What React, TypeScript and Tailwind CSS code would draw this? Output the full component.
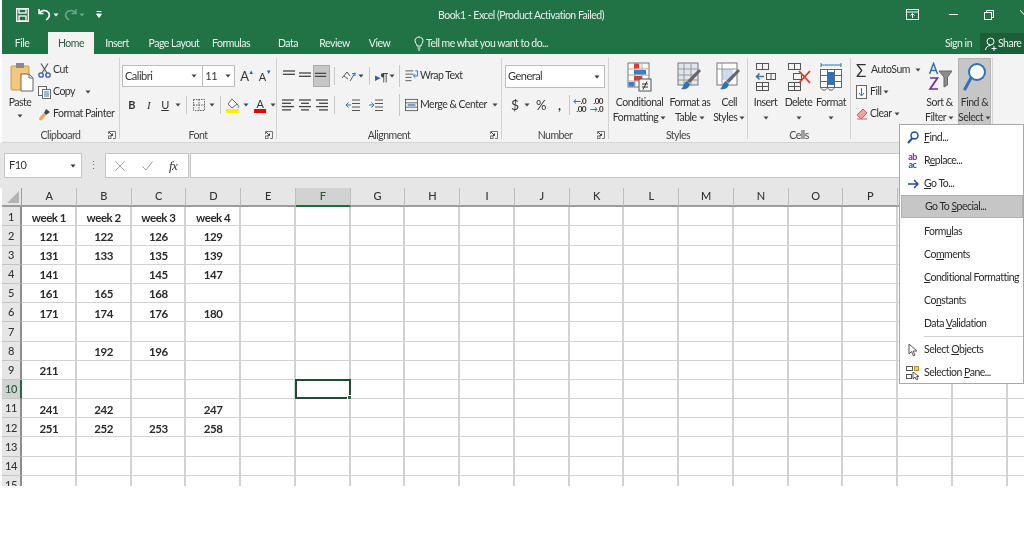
// Excel ribbon with Find & Select menu open
import React from "react";

const Caret = ({ className = "", color = "#444" }: { className?: string; color?: string }) => (
  <svg width="6" height="4" viewBox="0 0 6 4" className={`shrink-0 ${className}`} aria-hidden="true">
    <path d="M0.5 0.5H5.5L3 3.5Z" fill={color} />
  </svg>
);

const Launcher = () => (
  <svg width="8" height="8" viewBox="0 0 8 8" aria-hidden="true" fill="none" stroke="#777" strokeWidth="1">
    <path d="M0.5 3V0.5H7.5V7.5H5" />
    <path d="M1 1L4.5 4.5M2.5 4.5H4.5V2.5" stroke="#444" />
    <rect x="0.5" y="5" width="2.5" height="2.5" />
  </svg>
);

const Lines = ({ rows }: { rows: [number, number][] }) => (
  <svg width="16" height="14" viewBox="0 0 16 14" aria-hidden="true" stroke="#444" strokeWidth="1.3">
    {rows.map(([a, b], i) => (
      <line key={i} x1={a} x2={b} y1={2 + i * 3.3} y2={2 + i * 3.3} />
    ))}
  </svg>
);

const Sep = ({ h = "h-[22px]" }: { h?: string }) => <div className={`w-px ${h} bg-[#c8c8c8] shrink-0`} />;

const Group = ({
  w,
  label,
  launcher,
  children,
}: {
  w: string;
  label: string;
  launcher?: boolean;
  children: React.ReactNode;
}) => (
  <section className={`${w} shrink-0 h-[81px] border-r border-[#d2d2d2] flex flex-col`}>
    <div className="h-[70px] shrink-0">{children}</div>
    <div className="h-[14px] shrink-0 grid grid-cols-[1fr_auto_1fr] items-center text-[#444]">
      <span />
      <span className="text-[10.5px] leading-none">{label}</span>
      <span className="justify-self-end pr-[3px] flex">{launcher && <Launcher />}</span>
    </div>
  </section>
);

const BigButton = ({
  w,
  icon,
  l1,
  l2,
  arrowOnL2,
}: {
  w: string;
  icon: React.ReactNode;
  l1: string;
  l2?: string;
  arrowOnL2?: boolean;
}) => (
  <div className={`${w} flex flex-col items-center text-[10.5px] leading-[15px] text-[#333]`}>
    <div className="h-[33px] flex items-start justify-center">{icon}</div>
    <span className="whitespace-nowrap">{l1}</span>
    <span className="whitespace-nowrap flex items-center gap-[2px] h-[15px]">
      {l2}
      {arrowOnL2 && <Caret />}
    </span>
  </div>
);

const CondIcon = () => (
  <svg width="25" height="31" viewBox="0 0 25 31" aria-hidden="true">
    <rect x="1" y="1" width="21" height="24" fill="#fff" stroke="#777" />
    <path d="M8 1V25M15 1V25M1 7H22M1 13H22M1 19H22" stroke="#aaa" />
    <rect x="7" y="1.5" width="5" height="5" fill="#d9402e" />
    <rect x="7" y="8" width="12" height="4.500" fill="#3d7fc4" />
    <rect x="7" y="14" width="8" height="4.500" fill="#d9402e" />
    <rect x="1.500" y="20" width="6" height="4.500" fill="#3d7fc4" />
    <rect x="12" y="17" width="12" height="12" fill="#f4f4f4" stroke="#555" />
    <path d="M15 22H21M15 25H21M20 19.500L16 27.500" stroke="#333" />
  </svg>
);

const TableIcon = () => (
  <svg width="26" height="31" viewBox="0 0 26 31" aria-hidden="true">
    <rect x="1" y="1" width="20" height="22" fill="#dfe6ee" stroke="#777" />
    <path d="M1 7H21M1 13H21M1 18H21M7 1V23M14 1V23" stroke="#999" />
    <path d="M24 9L13 21L10 19L22 7Z" fill="#666" />
    <path d="M10 19L13 22C12 27 7 28 4 27C7 25 6 21 10 19Z" fill="#2f72b8" />
  </svg>
);

const CellStyleIcon = () => (
  <svg width="26" height="31" viewBox="0 0 26 31" aria-hidden="true">
    <rect x="1" y="1" width="20" height="22" fill="#fff" stroke="#777" />
    <rect x="6" y="7" width="11" height="11" fill="#c7dcef" />
    <path d="M1 7H21M6 1V23" stroke="#999" />
    <path d="M24 9L13 21L10 19L22 7Z" fill="#666" />
    <path d="M10 19L13 22C12 27 7 28 4 27C7 25 6 21 10 19Z" fill="#2f72b8" />
  </svg>
);

const InsertIcon = () => (
  <svg width="22" height="29" viewBox="0 0 22 29" fill="none" aria-hidden="true" stroke="#555">
    <rect x="1.500" y="1.500" width="12" height="6" />
    <path d="M7.500 1.500V7.500" />
    <rect x="11.500" y="11.500" width="9" height="6" />
    <path d="M16 11.500V17.500" />
    <path d="M1.500 14.500H9M4.500 11.500L1.500 14.500L4.500 17.500" stroke="#2f72b8" strokeWidth="1.500" />
    <rect x="1.500" y="20.500" width="12" height="8" />
    <path d="M7.500 20.500V28.500M1.500 24.500H13.500" />
  </svg>
);

const DeleteIcon = () => (
  <svg width="24" height="29" viewBox="0 0 24 29" fill="none" aria-hidden="true" stroke="#555">
    <rect x="1.500" y="1.500" width="12" height="6" />
    <path d="M7.500 1.500V7.500" />
    <rect x="6.500" y="11.500" width="8" height="6" />
    <rect x="1.500" y="20.500" width="12" height="8" />
    <path d="M7.500 20.500V28.500M1.500 24.500H13.500" />
    <path d="M12 9L23 21M23 9L12 21" stroke="#d8392b" strokeWidth="1.800" />
  </svg>
);

const FormatIcon = () => (
  <svg width="24" height="31" viewBox="0 0 24 31" fill="none" aria-hidden="true" stroke="#666">
    <path d="M2 3H22M2 1V5M22 1V5" stroke="#2f72b8" />
    <rect x="1.500" y="7.500" width="21" height="18" fill="#fff" />
    <path d="M8.500 7.500V25.500M15.500 7.500V25.500M1.500 13.500H22.500M1.500 19.500H22.500" />
    <rect x="9" y="10" width="6" height="13" fill="#2f72b8" stroke="none" />
    <path d="M2 25.500C2 29 8 29 8 25.500M9 25.500C9 29 15 29 15 25.500" />
  </svg>
);

const SortIcon = () => (
  <svg width="24" height="29" viewBox="0 0 24 29" aria-hidden="true" fill="none">
    <path d="M1.500 12L5.500 1.500L9.500 12M3 8.500H8" stroke="#2f72b8" strokeWidth="1.500" />
    <path d="M2 16H9.500L2 27H10" stroke="#7030a0" strokeWidth="1.700" />
    <path d="M11 9H24L19.500 15V23L16 25V15Z" fill="#8c8c8c" stroke="#666" />
  </svg>
);

const FindBigIcon = () => (
  <svg width="24" height="29" viewBox="0 0 24 29" fill="none" aria-hidden="true">
    <circle cx="14" cy="10" r="8" fill="#fff" stroke="#2f72b8" strokeWidth="2" />
    <path d="M8 16L2 27" stroke="#2f72b8" strokeWidth="3" strokeLinecap="round" />
  </svg>
);

const PasteIcon = () => (
  <svg width="24" height="30" viewBox="0 0 24 30" aria-hidden="true">
    <rect x="1" y="4" width="18" height="24" rx="1" fill="#f2c77e" stroke="#c99a4b" />
    <rect x="6" y="1" width="8" height="5" fill="#8a8a8a" />
    <path d="M11 12H19L23 16V29H11Z" fill="#fff" stroke="#666" />
    <path d="M19 12V16H23" fill="none" stroke="#666" />
  </svg>
);

const ScissorsIcon = () => (
  <svg width="13" height="15" viewBox="0 0 13 15" fill="none" aria-hidden="true">
    <path d="M3 0.500L9 10M10 0.500L4 10" stroke="#555" strokeWidth="1.200" />
    <circle cx="3" cy="12" r="2.200" stroke="#2f5fa8" strokeWidth="1.300" />
    <circle cx="10" cy="12" r="2.200" stroke="#2f5fa8" strokeWidth="1.300" />
  </svg>
);

const CopyIcon = () => (
  <svg width="13" height="13" viewBox="0 0 13 13" fill="none" aria-hidden="true" stroke="#666">
    <rect x="0.500" y="0.500" width="8" height="9" fill="#fff" />
    <rect x="4.500" y="3.500" width="8" height="9" fill="#fff" />
    <path d="M6 6H11M6 8H11M6 10H11" stroke="#2f72b8" />
  </svg>
);

const PainterIcon = () => (
  <svg width="13" height="13" viewBox="0 0 13 13" aria-hidden="true">
    <path d="M8 1L12 4L8 7L6 5Z" fill="#444" />
    <path d="M6 5L8 7L4 12C3 13 1 12 1 11C1 9 4 7 6 5Z" fill="#e2ad55" />
  </svg>
);

const Clipboard = () => (
  <div className="flex h-full">
    <div className="w-[36px] pt-[4px] flex flex-col items-center text-[10.5px] text-[#333]">
      <div className="ml-[3px] flex">
        <PasteIcon />
      </div>
      <span className="mt-[4px] leading-[13px]">Paste</span>
      <Caret className="mt-[5px]" />
    </div>
    <div className="flex flex-col text-[10.5px] text-[#333] pt-[1px]">
      <div className="h-[22px] flex items-center gap-[2px]">
        <ScissorsIcon />
        <span>Cut</span>
      </div>
      <div className="h-[22px] flex items-center gap-[2px]">
        <CopyIcon />
        <span>Copy</span>
        <Caret className="ml-[8px]" />
      </div>
      <div className="h-[22px] flex items-center gap-[2px]">
        <PainterIcon />
        <span className="whitespace-nowrap">Format Painter</span>
      </div>
    </div>
  </div>
);

const FontGroup = () => (
  <div className="pl-[2px] pt-[7px] text-[#333]">
    <div className="flex items-center h-[22px]">
      <div className="w-[84px] h-[22px] bg-white border border-[#bcbcbc] flex items-center justify-between pl-[2px] pr-[5px] text-[11px]">
        Calibri
        <Caret />
      </div>
      <div className="w-[33px] h-[22px] bg-white border border-l-0 border-[#bcbcbc] flex items-center justify-between pl-[2px] pr-[3px] text-[11px]">
        11
        <Caret />
      </div>
      <span className="ml-[5px] w-[19px] text-[13px] leading-none relative">
        A<i className="absolute left-[8px] -top-[1px] text-[6px] not-italic text-[#2f5fa8]">▲</i>
      </span>
      <span className="w-[18px] text-[11px] leading-none relative">
        A<i className="absolute left-[7px] -top-[2px] text-[6px] not-italic text-[#2f5fa8]">▼</i>
      </span>
    </div>
    <div className="flex items-center h-[22px] mt-[7px] text-[11px]">
      <b className="w-[17px] ml-[1px] text-center">B</b>
      <i className="w-[17px] text-center font-['Liberation_Serif',serif]">I</i>
      <u className="w-[16px] text-center">U</u>
      <Caret className="ml-[2px]" />
      <Sep h="h-[18px] ml-[5px]" />
      <svg width="12" height="12" viewBox="0 0 12 12" className="ml-[6px]" fill="none" stroke="#666" aria-hidden="true">
        <path d="M0.500 0.500H11.500V11.500H0.500ZM6 0.500V11.500M0.500 6H11.500" strokeDasharray="1.500 1" />
      </svg>
      <Caret className="ml-[4px]" />
      <Sep h="h-[18px] ml-[5px]" />
      <svg width="14" height="15" viewBox="0 0 14 15" className="ml-[5px]" aria-hidden="true">
        <path d="M6 1L11 6L6 10L2 6Z" fill="#fff" stroke="#666" />
        <path d="M11 6C13 8 13 9 12 10" stroke="#2f72b8" fill="none" />
        <rect x="0" y="11" width="13" height="4" fill="#ffee00" />
      </svg>
      <Caret className="ml-[3px]" />
      <span className="ml-[5px] w-[12px] flex flex-col items-center leading-[11px]">
        <span>A</span>
        <span className="w-[12px] h-[4px] bg-[#e60000]" />
      </span>
      <Caret className="ml-[4px]" />
    </div>
  </div>
);

const OrientIcon = () => (
  <svg width="15" height="13" viewBox="0 0 15 13" fill="none" stroke="#555" aria-hidden="true">
    <path d="M1 8L6 2L9 6M3 6L7 9M9 11L14 3" />
    <path d="M14 3L11 4M14 3L14 6" stroke="#2f72b8" />
  </svg>
);

const WrapIcon = () => (
  <svg width="14" height="14" viewBox="0 0 15 14" fill="none" aria-hidden="true">
    <path d="M0.500 1.500H9M0.500 5H9M0.500 8.500H7M0.500 12H7" stroke="#555" />
    <path d="M11 1.500H13.500V7H9.500M11 5L9 7L11 9" stroke="#2f72b8" />
  </svg>
);

const MergeIcon = () => (
  <svg width="13" height="14" viewBox="0 0 15 14" fill="none" aria-hidden="true">
    <rect x="0.500" y="0.500" width="14" height="13" stroke="#555" />
    <path d="M0.500 4.500H14.500M0.500 9.500H14.500" stroke="#555" />
    <path d="M3 7H12" stroke="#2f72b8" strokeWidth="1.500" />
  </svg>
);

const IndentIcon = ({ out }: { out?: boolean }) => (
  <svg width="14" height="13" viewBox="0 0 14 13" fill="none" aria-hidden="true">
    <path d="M6 1H14M6 4.500H14M6 8H14M6 11.500H14" stroke="#555" />
    <path d={out ? "M5 6H0M2.500 3.500L0 6L2.500 8.500" : "M0 6H5M2.500 3.500L5 6L2.500 8.500"} stroke="#2f72b8" />
  </svg>
);

const Alignment = () => (
  <div className="pt-[7px] pl-[4px] text-[#333]">
    <div className="flex items-center h-[22px]">
      <div className="w-[16px] flex justify-center">
        <Lines rows={[[2, 14], [2, 14]]} />
      </div>
      <div className="w-[16px] flex justify-center pt-[3px]">
        <Lines rows={[[2, 14], [2, 14]]} />
      </div>
      <div className="w-[17px] h-[22px] bg-[#c6c6c6] border border-[#aaa] flex justify-center items-end pb-[1px]">
        <Lines rows={[[1, 13], [1, 13]]} />
      </div>
      <Sep h="h-[18px] ml-[4px]" />
      <div className="ml-[6px]">
        <OrientIcon />
      </div>
      <Caret className="ml-[2px]" />
      <Sep h="h-[18px] ml-[5px]" />
      <span className="ml-[5px] text-[11px] text-[#444] leading-none w-[13px] whitespace-nowrap">
        <span className="text-[#2f5fa8]">▸</span>¶
      </span>
      <Caret className="ml-[1px]" />
      <Sep h="h-[22px] ml-[4px]" />
      <div className="ml-[5px] flex">
        <WrapIcon />
      </div>
      <span className="ml-[1px] text-[10.5px] whitespace-nowrap">Wrap Text</span>
    </div>
    <div className="flex items-center h-[22px] mt-[7px]">
      <div className="w-[16px] flex justify-center">
        <Lines rows={[[1, 13], [1, 10], [1, 13], [1, 10]]} />
      </div>
      <div className="w-[16px] flex justify-center">
        <Lines rows={[[2, 14], [4, 12], [2, 14], [4, 12]]} />
      </div>
      <div className="w-[17px] flex justify-center">
        <Lines rows={[[2, 14], [5, 14], [2, 14], [5, 14]]} />
      </div>
      <Sep h="h-[18px] ml-[4px]" />
      <div className="ml-[11px] flex">
        <IndentIcon out />
      </div>
      <div className="ml-[9px] flex">
        <IndentIcon />
      </div>
      <Sep h="h-[22px] ml-[16px]" />
      <div className="ml-[5px] flex">
        <MergeIcon />
      </div>
      <span className="ml-[2px] text-[10.5px] whitespace-nowrap">Merge &amp; Center</span>
      <Caret className="ml-[5px]" />
    </div>
  </div>
);

const NumberGroup = () => (
  <div className="pt-[7px] pl-[3px] text-[#333]">
    <div className="w-[100px] h-[23px] bg-white border border-[#bcbcbc] flex items-center justify-between pl-[2px] pr-[4px] text-[11px]">
      General
      <Caret color="#333" />
    </div>
    <div className="flex items-center h-[22px] mt-[6px]">
      <span className="ml-[6px] w-[11px] text-[14px] leading-none">$</span>
      <Caret className="ml-[2px]" />
      <span className="ml-[6px] w-[14px] text-[13px] leading-none">%</span>
      <span className="ml-[8px] w-[6px] text-[13px] font-bold leading-none">,</span>
      <Sep h="h-[20px] ml-[5px]" />
      <span className="ml-[3px] w-[13px] text-[8px] leading-[8px] font-bold text-right">
        <span className="text-[#2f72b8]">←</span>.0
        <br />
        .00
      </span>
      <span className="ml-[4px] w-[13px] text-[8px] leading-[8px] font-bold text-right">
        .00
        <br />
        <span className="text-[#2f72b8]">→</span>.0
      </span>
    </div>
  </div>
);

const Styles = () => (
  <div className="flex pt-[4px] pl-[2px]">
    <BigButton w="w-[58px]" icon={<CondIcon />} l1="Conditional" l2="Formatting" arrowOnL2 />
    <BigButton w="w-[44px]" icon={<TableIcon />} l1="Format as" l2="Table" arrowOnL2 />
    <BigButton w="w-[36px]" icon={<CellStyleIcon />} l1="Cell" l2="Styles" arrowOnL2 />
  </div>
);

const Cells = () => (
  <div className="flex pt-[4px] pl-[1px]">
    <BigButton w="w-[33px]" icon={<InsertIcon />} l1="Insert" arrowOnL2 />
    <BigButton w="w-[33px]" icon={<DeleteIcon />} l1="Delete" arrowOnL2 />
    <BigButton w="w-[32px]" icon={<FormatIcon />} l1="Format" arrowOnL2 />
  </div>
);

const Editing = () => (
  <div className="flex h-full text-[10.5px] text-[#333]">
    <div className="w-[73px] flex flex-col pl-[5px] pt-[1px]">
      <div className="h-[22px] flex items-center">
        <span className="w-[14px] text-[17px] leading-none text-[#333]">Σ</span>
        <span className="ml-[1px]">AutoSum</span>
        <Caret className="ml-[5px]" />
      </div>
      <div className="h-[22px] flex items-center">
        <svg width="11" height="14" viewBox="0 0 11 14" fill="none" aria-hidden="true">
          <rect x="0.500" y="0.500" width="10" height="13" fill="#fff" stroke="#666" />
          <path d="M5.500 3V10M3 8L5.500 11L8 8" stroke="#2f72b8" />
        </svg>
        <span className="ml-[3px]">Fill</span>
        <Caret className="ml-[2px]" />
      </div>
      <div className="h-[22px] flex items-center">
        <svg width="12" height="12" viewBox="0 0 12 12" aria-hidden="true">
          <path d="M7 1L11 5L5 11L1 7Z" fill="#f0a3a3" stroke="#d85a5a" />
          <path d="M1 11H11" stroke="#d85a5a" />
        </svg>
        <span className="ml-[2px]">Clear</span>
        <Caret className="ml-[2px]" />
      </div>
    </div>
    <div className="pt-[4px] w-[31px]">
      <BigButton w="w-[31px]" icon={<SortIcon />} l1="Sort &" l2="Filter" arrowOnL2 />
    </div>
    <div className="ml-[3px] w-[33px] h-[67px] bg-[#c6c6c6] border border-[#b4b4b4] pt-[3px]">
      <BigButton w="w-[31px]" icon={<FindBigIcon />} l1="Find &" l2="Select" arrowOnL2 />
    </div>
  </div>
);

const MenuItem = ({
  icon,
  active,
  children,
  className = "h-[23px]",
}: {
  icon?: React.ReactNode;
  active?: boolean;
  children: React.ReactNode;
  className?: string;
}) => (
  <div className={`${className} flex items-center ${active ? "bg-[#c6c6c6] border border-[#b0b0b0]" : ""}`}>
    <div className="w-[23px] flex justify-center shrink-0">{icon}</div>
    <span className="text-[10.5px] whitespace-nowrap text-[#2b2b2b]">{children}</span>
  </div>
);

const FindMenu = () => (
  <div className="absolute left-[899px] top-[124px] w-[125px] h-[260px] bg-white border border-[#a8a8a8] pl-[1px] pt-[1px] overflow-hidden">
    <MenuItem
      icon={
        <svg width="12" height="13" viewBox="0 0 12 13" fill="none" aria-hidden="true">
          <circle cx="7.500" cy="4.500" r="3.500" stroke="#1f4e9a" strokeWidth="1.500" />
          <path d="M5 7.500L1 12" stroke="#1f4e9a" strokeWidth="2" />
        </svg>
      }
    >
      <u>F</u>ind...
    </MenuItem>
    <MenuItem
      icon={
        <span className="text-[9px] leading-[8px] font-bold text-center text-[#333]">
          <span className="text-[#7030a0]">ab</span>
          <br />
          <span className="text-[#1f4e9a]">ac</span>
        </span>
      }
    >
      R<u>e</u>place...
    </MenuItem>
    <MenuItem
      icon={
        <svg width="12" height="10" viewBox="0 0 12 10" fill="none" stroke="#1f4e9a" strokeWidth="1.500" aria-hidden="true">
          <path d="M1 5H11M7 1L11 5L7 9" />
        </svg>
      }
    >
      <u>G</u>o To...
    </MenuItem>
    <MenuItem active>
      Go To <u>S</u>pecial...
    </MenuItem>
    <MenuItem className="h-[25px] pt-[2px]">
      Form<u>u</u>las
    </MenuItem>
    <MenuItem>
      Co<u>m</u>ments
    </MenuItem>
    <MenuItem>
      <u>C</u>onditional Formatting
    </MenuItem>
    <MenuItem>
      Co<u>n</u>stants
    </MenuItem>
    <MenuItem>
      Data <u>V</u>alidation
    </MenuItem>
    <div className="h-px ml-[23px] bg-[#cfcfcf] mt-[1px]" />
    <MenuItem
      className="h-[23px] mt-[1px]"
      icon={
        <svg width="10" height="14" viewBox="0 0 10 14" fill="#fff" stroke="#555" aria-hidden="true">
          <path d="M1 1V11L3.500 8.500L5.500 13L7 12L5 8H9Z" />
        </svg>
      }
    >
      Select <u>O</u>bjects
    </MenuItem>
    <MenuItem
      icon={
        <svg width="14" height="14" viewBox="0 0 14 14" fill="none" stroke="#555" aria-hidden="true">
          <rect x="0.500" y="0.500" width="6" height="4" />
          <rect x="0.500" y="8.500" width="5" height="4" />
          <rect x="8.500" y="0.500" width="4" height="4" fill="#f4c27c" stroke="#c98a2c" />
          <path d="M7 6V13L9 11L10.500 14L12 13L10.500 10.500H13Z" fill="#fff" />
        </svg>
      }
    >
      Selection <u>P</u>ane...
    </MenuItem>
  </div>
);

const COLS = ["A", "B", "C", "D", "E", "F", "G", "H", "I", "J", "K", "L", "M", "N", "O", "P", "Q", "R", "S"];
const DATA: Record<number, string[]> = {
  1: ["week 1", "week 2", "week 3", "week 4"],
  2: ["121", "122", "126", "129"],
  3: ["131", "133", "135", "139"],
  4: ["141", "", "145", "147"],
  5: ["161", "165", "168", ""],
  6: ["171", "174", "176", "180"],
  8: ["", "192", "196", ""],
  9: ["211", "", "", ""],
  11: ["241", "242", "", "247"],
  12: ["251", "252", "253", "258"],
};

const Sheet = () => (
  <div className="h-[298px] overflow-hidden grid grid-cols-[20px_repeat(19,54.75px)] auto-rows-[19.2px] content-start">
    <div className="h-[19.2px] bg-[#e6e6e6] border-r border-b-2 border-[#9c9c9c] flex items-end justify-end pr-[2px] pb-[2px]">
      <svg width="12" height="12" viewBox="0 0 12 12" aria-hidden="true">
        <path d="M12 0V12H0Z" fill="#b4b4b4" />
      </svg>
    </div>
    {COLS.map((c) => (
      <div
        key={c}
        className={`flex items-center justify-center text-[11px] font-medium border-r border-[#bdbdbd] border-b-2 ${
          c === "F" ? "bg-[#d2d2d2] border-b-[#1e6b41] text-[#1e5c38]" : "bg-[#e6e6e6] border-b-[#9c9c9c] text-[#333]"
        }`}
      >
        {c}
      </div>
    ))}
    {Array.from({ length: 15 }, (_, i) => i + 1).flatMap((r) => [
      <div
        key={`h${r}`}
        className={`flex items-center justify-center text-[11px] font-medium pt-[1px] border-b border-[#c4c4c4] border-r-2 ${
          r === 10 ? "bg-[#d2d2d2] border-r-[#1e6b41] text-[#1e5c38]" : "bg-[#e6e6e6] border-r-[#8e8e8e] text-[#333]"
        }`}
      >
        {r}
      </div>,
      ...COLS.map((c, ci) => (
        <div
          key={`${c}${r}`}
          className="relative flex items-center justify-center pt-[2px] pl-[1px] text-[11.5px] font-bold tracking-[-0.5px] text-[#2a2a2a] border-r-2 border-b-[1.5px] border-[#d2d2d2]"
        >
          {DATA[r]?.[ci]}
          {c === "F" && r === 10 && (
            <div className="absolute -left-[1px] -top-[1px] -right-[2px] -bottom-[1px] border-2 border-[#1e4d33]">
              <div className="absolute -right-[3px] -bottom-[3px] w-[5px] h-[5px] bg-[#1e6b41] border border-white" />
            </div>
          )}
        </div>
      )),
    ])}
  </div>
);

export default function App() {
  return (
    <div className="relative w-[1024px] h-[538px] overflow-hidden bg-white pl-[2px] font-['Lato',sans-serif] tracking-[-0.5px] blur-[0.3px]">
      {/* title bar + tabs */}
      <header className="h-[54px] bg-[#217346] text-white">
        <div className="h-[29px] flex items-center">
          <svg width="13" height="14" viewBox="0 0 13 14" className="ml-[14px]" fill="none" stroke="#fff" strokeWidth="1.300" aria-hidden="true">
            <rect x="0.700" y="0.700" width="11.600" height="12.600" />
            <rect x="3" y="1" width="7" height="4" />
            <rect x="3" y="8" width="7" height="5" />
          </svg>
          <svg width="13" height="13" viewBox="0 0 13 13" className="ml-[9px]" fill="none" stroke="#fff" strokeWidth="1.500" aria-hidden="true">
            <path d="M1 1V5.500H5.500M1.500 5C3.500 2 8 1.500 10.500 4.500C12 7 11 10 8 12" />
          </svg>
          <Caret className="ml-[2px]" color="#fff" />
          <svg width="13" height="13" viewBox="0 0 13 13" className="ml-[5px]" fill="none" stroke="#6fa487" strokeWidth="1.500" aria-hidden="true">
            <path d="M12 1V5.500H7.500M11.500 5C9.500 2 5 1.500 2.500 4.500C1 7 2 10 5 12" />
          </svg>
          <Caret className="ml-[2px]" color="#6fa487" />
          <svg width="6" height="7" viewBox="0 0 6 7" className="ml-[11px]" aria-hidden="true">
            <path d="M0.500 0.500H5.500M0.500 3H5.500L3 6.500Z" stroke="#fff" fill="#fff" strokeWidth="1" />
          </svg>
          <span className="ml-[336px] w-[170px] pt-[2px] text-[10.5px] whitespace-nowrap text-[#e6efe9]">
            Book1 - Excel (Product Activation Failed)
          </span>
          <svg width="13" height="11" viewBox="0 0 13 11" className="ml-[298px]" fill="none" stroke="#fff" aria-hidden="true">
            <rect x="0.500" y="0.500" width="12" height="10" />
            <path d="M0.500 3H12.500M6.500 9V5M4.500 6.500L6.500 4.500L8.500 6.500" />
          </svg>
          <div className="ml-[30px] w-[9px] h-[1.500px] bg-white" />
          <svg width="10" height="10" viewBox="0 0 10 10" className="ml-[26px]" fill="none" stroke="#fff" aria-hidden="true">
            <rect x="0.500" y="2.500" width="7" height="7" />
            <path d="M2.500 2.500V0.500H9.500V7.500H7.500" />
          </svg>
          <svg width="4" height="10" viewBox="0 0 4 10" className="ml-[26px]" fill="none" stroke="#fff" aria-hidden="true">
            <path d="M0 0L8 9" />
          </svg>
        </div>
        <div className="h-[25px] flex items-end text-[10.5px] text-[#eaf2ed]">
          <span className="w-[46px] h-[22px] flex items-center justify-center pr-[6px] pt-[1px]">File</span>
          <span className="w-[46px] h-[22px] bg-[#f3f3f3] text-[#2a5c42] flex items-center justify-center pt-[1px]">Home</span>
          <span className="w-[46px] h-[22px] flex items-center justify-center pt-[1px]">Insert</span>
          <span className="w-[68px] h-[22px] flex items-center justify-center whitespace-nowrap pt-[1px]">Page Layout</span>
          <span className="w-[46px] h-[22px] flex items-center justify-center pt-[1px]">Formulas</span>
          <span className="w-[68px] h-[22px] flex items-center justify-center pt-[1px]">Data</span>
          <span className="w-[25px] h-[22px] flex items-center justify-center pt-[1px]">Review</span>
          <span className="w-[65px] h-[22px] flex items-center justify-center pt-[1px]">View</span>
          <span className="h-[22px] flex items-center gap-[2px] ml-[2px] pt-[1px]">
            <svg width="10" height="15" viewBox="0 0 10 15" fill="none" stroke="#fff" aria-hidden="true">
              <path d="M3 10C3 8 1 7 1 4.500C1 2.500 3 1 5 1C7 1 9 2.500 9 4.500C9 7 7 8 7 10ZM3.500 12H6.500M4 14H6" />
            </svg>
            Tell me what you want to do...
          </span>
          <span className="ml-auto h-[22px] flex items-center mr-[8px] pt-[1px]">Sign in</span>
          <span className="h-[21px] w-[44px] bg-[#1b5e38] flex items-center gap-[1px] pl-[5px] overflow-hidden">
            <svg width="12" height="14" viewBox="0 0 12 14" fill="none" stroke="#fff" className="shrink-0" aria-hidden="true">
              <circle cx="5.500" cy="4.500" r="3.500" />
              <path d="M0.500 13C1 10 3 8.500 5.500 8.500M9 9V14M6.500 11.500H11.500" />
            </svg>
            Share
          </span>
        </div>
      </header>

      {/* ribbon */}
      <div className="h-[89px] bg-[#f3f3f3] border-b border-[#d6d6d6] pt-[4px] flex">
        <Group w="w-[118px]" label="Clipboard" launcher>
          <Clipboard />
        </Group>
        <Group w="w-[157px]" label="Font" launcher>
          <FontGroup />
        </Group>
        <Group w="w-[225px]" label="Alignment" launcher>
          <Alignment />
        </Group>
        <Group w="w-[107px]" label="Number" launcher>
          <NumberGroup />
        </Group>
        <Group w="w-[139px]" label="Styles">
          <Styles />
        </Group>
        <Group w="w-[103px]" label="Cells">
          <Cells />
        </Group>
        <Group w="w-[142px]" label="">
          <Editing />
        </Group>
      </div>

      {/* formula bar */}
      <div className="h-[45px] -ml-[2px] pl-[4px] bg-[#e6e6e6] pt-[10px] flex">
        <div className="w-[78px] h-[25px] bg-white border border-[#c6c6c6] flex items-center justify-between pl-[4px] pr-[5px] text-[11px] text-[#333]">
          F10
          <Caret color="#333" />
        </div>
        <span className="w-[23px] h-[25px] flex items-center justify-center text-[11px] text-[#777]">⋮</span>
        <div className="w-[84px] h-[25px] bg-white border border-[#c6c6c6] flex items-center text-[#aaa]">
          <svg width="10" height="10" viewBox="0 0 10 10" className="ml-[9px]" stroke="#a0a0a0" aria-hidden="true">
            <path d="M0.500 0.500L9.500 9.500M9.500 0.500L0.500 9.500" />
          </svg>
          <svg width="11" height="10" viewBox="0 0 11 10" className="ml-[17px]" fill="none" stroke="#a0a0a0" aria-hidden="true">
            <path d="M0.500 5.500L4 9L10.500 0.500" />
          </svg>
          <span className="ml-[16px] text-[13px] italic font-['Liberation_Serif',serif] text-[#333]">fx</span>
        </div>
        <div className="ml-[1px] flex-1 h-[25px] bg-white border border-[#c6c6c6]" />
      </div>

      <Sheet />
      <FindMenu />
    </div>
  );
}
